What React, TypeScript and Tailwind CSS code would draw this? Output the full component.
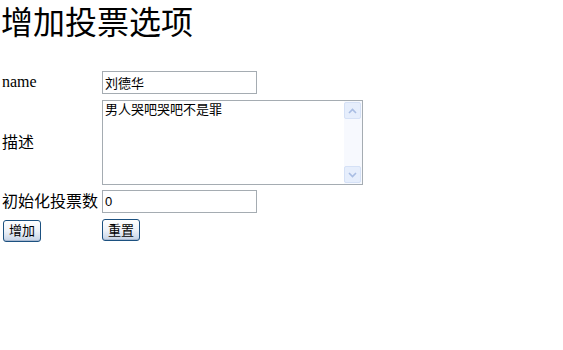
const serif = "font-['Liberation_Serif','Noto_Sans_CJK_SC',serif]";
const sans = "font-['Liberation_Sans','Noto_Sans_CJK_SC',sans-serif]";

function XpButton({ children }: { children: React.ReactNode }) {
  return (
    <button
      type="button"
      className={`h-[22px] w-[38px] rounded-[3px] border border-[#1c5180] bg-gradient-to-b from-white via-[#eef2f8] to-[#c5d3e6] text-[13px] leading-none text-black shadow-[inset_0_-1px_0_#a9b9d0] ${sans}`}
    >
      {children}
    </button>
  );
}

function Arrow({ up }: { up?: boolean }) {
  return (
    <div className="flex h-[17px] w-[17px] items-center justify-center rounded-[2px] border border-[#d5e1f6] bg-[#e6eefc]">
      <svg width="9" height="6" viewBox="0 0 9 6">
        <path
          d={up ? "M1 5 L4.5 1.5 L8 5" : "M1 1 L4.5 4.5 L8 1"}
          fill="none"
          stroke="#a9bde3"
          strokeWidth="1.6"
        />
      </svg>
    </div>
  );
}

export default function App() {
  return (
    <div className={`h-[350px] w-[563px] bg-white text-black ${serif}`}>
      <h1 className="pl-[1px] pt-[5px] text-[32px] leading-[37px] font-normal">增加投票选项</h1>

      <div className="mt-[28px] flex flex-col text-[16px]">
        <div className="flex h-[24px] items-center">
          <div className="w-[102px] pl-[2px]">name</div>
          <input
            defaultValue="刘德华"
            className={`h-[23px] w-[155px] border border-[#a5acb2] px-[2px] text-[13px] outline-none ${sans}`}
          />
        </div>

        <div className="mt-[6px] flex h-[85px] items-center">
          <div className="w-[102px] pl-[2px]">描述</div>
          <div className="flex h-[85px] w-[261px] border border-[#a5acb2]">
            <textarea
              defaultValue="男人哭吧哭吧不是罪"
              className={`flex-1 resize-none px-[2px] pt-[1px] text-[13px] leading-[16px] outline-none ${sans}`}
            />
            <div className="flex w-[18px] flex-col justify-between bg-[#f7f9fe] pb-[1px] pt-[1px] pr-[1px]">
              <Arrow up />
              <Arrow />
            </div>
          </div>
        </div>

        <div className="mt-[5px] flex h-[23px] items-center">
          <div className="w-[102px] pl-[2px]">初始化投票数</div>
          <input
            defaultValue="0"
            className={`h-[23px] w-[155px] border border-[#a5acb2] px-[2px] text-[13px] outline-none ${sans}`}
          />
        </div>

        <div className="mt-[6px] flex h-[22px] items-center">
          <div className="w-[102px] pl-[3px]">
            <XpButton>增加</XpButton>
          </div>
          <XpButton>重置</XpButton>
        </div>
      </div>
    </div>
  );
}
